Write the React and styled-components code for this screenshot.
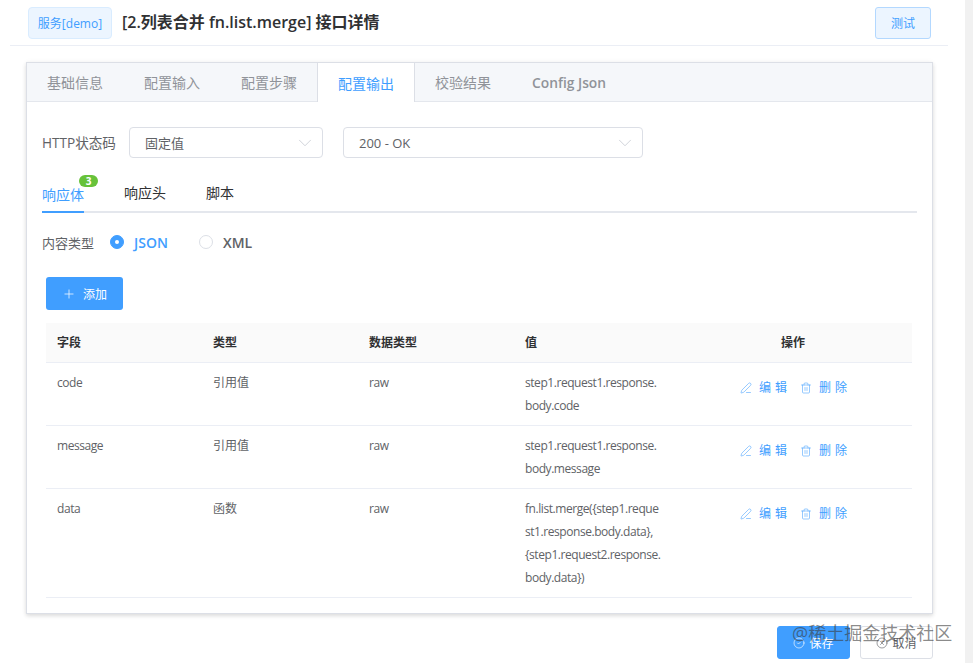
import React from 'react';
import styled, { createGlobalStyle } from 'styled-components';
import { ChevronDown, CircleCheck, CircleX, PenLine, Plus, Trash2 } from 'lucide-react';

const BLUE = '#409eff';
const FONT = '"Open Sans", "Noto Sans CJK SC", sans-serif';

const GlobalStyle = createGlobalStyle`
  html, body {
    margin: 0;
    padding: 0;
    background: #fff;
    font-family: ${FONT};
  }
  * {
    box-sizing: border-box;
  }
`;

const Page = styled.div`
  position: relative;
  width: 973px;
  height: 663px;
  overflow: hidden;
  display: grid;
  grid-template-columns: 965px 8px;
`;

const Main = styled.div`
  padding: 0 0 0 10px;
`;

const Scrollbar = styled.div`
  background: #f1f1f1;
`;

const Header = styled.header`
  width: 938px;
  height: 46px;
  padding: 7px 17px 6px 18px;
  display: flex;
  align-items: flex-start;
  border-bottom: 1px solid #ebeef5;
`;

const Tag = styled.span`
  width: 84px;
  height: 32px;
  display: flex;
  align-items: center;
  justify-content: center;
  font-size: 12px;
  color: ${BLUE};
  background: #ecf5ff;
  border: 1px solid #d9ecff;
  border-radius: 4px;
`;

const Title = styled.h1`
  margin: 0 0 0 10px;
  flex: 1;
  font-size: 16px;
  line-height: 31px;
  font-weight: 600;
  color: #303133;
`;

const TestButton = styled.button`
  width: 56px;
  height: 32px;
  padding: 0;
  font: 12px ${FONT};
  color: ${BLUE};
  background: #ecf5ff;
  border: 1px solid #b3d8ff;
  border-radius: 3px;
`;

const Card = styled.section`
  width: 907px;
  height: 552px;
  margin: 16px 0 0 16px;
  background: #fff;
  border: 1px solid #dcdfe6;
  box-shadow: 0 2px 4px rgba(0, 0, 0, 0.12), 0 0 6px rgba(0, 0, 0, 0.04);
`;

const TabBar = styled.div`
  height: 39px;
  display: flex;
  background: #f5f7fa;
  border-bottom: 1px solid #e4e7ed;
`;

const Tab = styled.div`
  height: ${({ $active }) => ($active ? '39px' : '38px')};
  padding: 0 20px;
  display: flex;
  align-items: center;
  font-size: ${({ $latin }) => ($latin ? '13.8px' : '14px')};
  font-weight: ${({ $latin }) => ($latin ? 600 : 400)};
  color: ${({ $active }) => ($active ? BLUE : '#909399')};
  background: ${({ $active }) => ($active ? '#fff' : 'transparent')};
  border-right: 1px solid ${({ $active }) => ($active ? '#dcdfe6' : 'transparent')};
  ${({ $active }) => $active && 'border-left: 1px solid #dcdfe6; margin-left: -1px;'}
`;

const Body = styled.div`
  padding: 25px 15px 0;
`;

const FieldRow = styled.div`
  display: flex;
  align-items: center;
  height: 31px;
`;

const FieldLabel = styled.label`
  width: 87px;
  padding-bottom: 2px;
  font-size: 13.6px;
  color: #606266;
`;

const Select = styled.div`
  width: ${({ $width }) => $width}px;
  height: 31px;
  margin-right: 20px;
  padding: 0 15px;
  display: flex;
  align-items: center;
  justify-content: space-between;
  font-size: 13px;
  color: #606266;
  border: 1px solid #dcdfe6;
  border-radius: 4px;

  svg {
    color: #c0c4cc;
    margin-right: -9px;
  }
`;

const SubTabs = styled.div`
  margin-top: 20px;
  width: 875px;
  height: 35px;
  display: flex;
  gap: 40px;
  border-bottom: 2px solid #e4e7ed;
`;

const SubTab = styled.div`
  position: relative;
  height: 35px;
  padding-top: ${({ $active }) => ($active ? '7px' : '5px')};
  font-size: 14px;
  line-height: 20px;
  color: ${({ $active }) => ($active ? BLUE : '#303133')};
  border-bottom: 2px solid ${({ $active }) => ($active ? BLUE : 'transparent')};
`;

const Badge = styled.span`
  position: absolute;
  top: -3px;
  right: -14px;
  width: 19px;
  height: 12px;
  font-size: 10px;
  font-weight: 700;
  line-height: 12px;
  text-align: center;
  color: #fff;
  background: #67c23a;
  border-radius: 6px;
`;

const RadioRow = styled.div`
  margin-top: 19px;
  height: 20px;
  display: flex;
  align-items: center;
`;

const RadioLabel = styled.span`
  width: 68px;
  font-size: 13px;
  color: #606266;
`;

const Radio = styled.div`
  display: flex;
  align-items: center;
  width: 89px;
  font-size: 14px;
  font-weight: 600;
  color: ${({ $on }) => ($on ? BLUE : '#606266')};
`;

const RadioDot = styled.span`
  width: 14px;
  height: 14px;
  margin-right: 10px;
  border-radius: 50%;
  display: flex;
  align-items: center;
  justify-content: center;
  background: ${({ $on }) => ($on ? BLUE : '#fff')};
  border: 1px solid ${({ $on }) => ($on ? BLUE : '#dcdfe6')};

  &::after {
    content: '';
    width: 4px;
    height: 4px;
    border-radius: 50%;
    background: #fff;
  }
`;

const AddButton = styled.button`
  margin: 25px 0 0 4px;
  width: 77px;
  height: 33px;
  padding: 0;
  display: flex;
  align-items: center;
  justify-content: center;
  gap: 7px;
  font: 12px ${FONT};
  color: #fff;
  background: ${BLUE};
  border: none;
  border-radius: 3px;
`;

const Table = styled.table`
  margin: 13px 0 0 4px;
  width: 866px;
  border-collapse: collapse;
  table-layout: fixed;
  font-size: 12px;
  color: #606266;
`;

const HeadCell = styled.th`
  width: ${({ $width }) => ($width ? `${$width}px` : 'auto')};
  height: 39px;
  padding: 0 11px;
  font-size: 12px;
  font-weight: 600;
  color: #303133;
  text-align: ${({ $center }) => ($center ? 'center' : 'left')};
  ${({ $center }) => $center && 'padding-left: 15px;'}
  background: #fafafa;
  border-bottom: 1px solid #ebeef5;
`;

const Cell = styled.td`
  padding: 8px 11px;
  line-height: 23px;
  vertical-align: top;
  border-bottom: 1px solid #ebeef5;
`;

const LatinCell = styled(Cell)`
  letter-spacing: -0.44px;
  white-space: nowrap;
`;

const Actions = styled.div`
  display: flex;
  align-items: center;
  height: 34px;
  padding-left: 59px;
  color: ${BLUE};
  letter-spacing: 4px;
`;

const ActionLink = styled.span`
  display: flex;
  align-items: center;
  gap: 7px;
  margin-right: 9px;
  white-space: nowrap;
`;

const Footer = styled.div`
  width: 923px;
  margin-top: 12px;
  display: flex;
  justify-content: flex-end;
  gap: 10px;
`;

const FooterButton = styled.button`
  width: 73px;
  height: 33px;
  padding: 0;
  display: flex;
  align-items: center;
  justify-content: center;
  gap: 4px;
  font: 12px ${FONT};
  color: ${({ $primary }) => ($primary ? '#fff' : '#606266')};
  background: ${({ $primary }) => ($primary ? BLUE : '#fff')};
  border: 1px solid ${({ $primary }) => ($primary ? BLUE : '#dcdfe6')};
  border-radius: 3px;
`;

const Watermark = styled.div`
  position: absolute;
  left: 792px;
  top: 621px;
  font-size: 18px;
  line-height: 24px;
  color: rgba(60, 60, 60, 0.6);
  white-space: nowrap;
`;

const tabs = ['基础信息', '配置输入', '配置步骤', '配置输出', '校验结果', 'Config Json'];

const rows = [
  { field: 'code', type: '引用值', value: ['step1.request1.response.', 'body.code'] },
  { field: 'message', type: '引用值', value: ['step1.request1.response.', 'body.message'] },
  {
    field: 'data',
    type: '函数',
    value: ['fn.list.merge({step1.reque', 'st1.response.body.data},', '{step1.request2.response.', 'body.data})'],
  },
];

const App = () => (
  <Page>
    <GlobalStyle />
    <Main>
      <Header>
        <Tag>服务[demo]</Tag>
        <Title>[2.列表合并 fn.list.merge] 接口详情</Title>
        <TestButton>测试</TestButton>
      </Header>
      <Card>
        <TabBar>
          {tabs.map((tab, i) => (
            <Tab key={tab} $active={i === 3} $latin={i === 5}>{tab}</Tab>
          ))}
        </TabBar>
        <Body>
          <FieldRow>
            <FieldLabel>HTTP状态码</FieldLabel>
            <Select $width={194}>固定值<ChevronDown size={22} strokeWidth={0.8} /></Select>
            <Select $width={300}>200 - OK<ChevronDown size={22} strokeWidth={0.8} /></Select>
          </FieldRow>
          <SubTabs>
            <SubTab $active>响应体<Badge>3</Badge></SubTab>
            <SubTab>响应头</SubTab>
            <SubTab>脚本</SubTab>
          </SubTabs>
          <RadioRow>
            <RadioLabel>内容类型</RadioLabel>
            <Radio $on><RadioDot $on />JSON</Radio>
            <Radio><RadioDot />XML</Radio>
          </RadioRow>
          <AddButton><Plus size={14} strokeWidth={1.25} />添加</AddButton>
          <Table>
            <thead>
              <tr>
                <HeadCell $width={156}>字段</HeadCell>
                <HeadCell $width={156}>类型</HeadCell>
                <HeadCell $width={156}>数据类型</HeadCell>
                <HeadCell $width={156}>值</HeadCell>
                <HeadCell $center>操作</HeadCell>
              </tr>
            </thead>
            <tbody>
              {rows.map((row) => (
                <tr key={row.field}>
                  <LatinCell>{row.field}</LatinCell>
                  <Cell>{row.type}</Cell>
                  <LatinCell>raw</LatinCell>
                  <LatinCell>{row.value.map((line) => <div key={line}>{line}</div>)}</LatinCell>
                  <Cell>
                    <Actions>
                      <ActionLink><PenLine size={12} strokeWidth={1.1} />编辑</ActionLink>
                      <ActionLink><Trash2 size={12} strokeWidth={1.1} />删除</ActionLink>
                    </Actions>
                  </Cell>
                </tr>
              ))}
            </tbody>
          </Table>
        </Body>
      </Card>
      <Footer>
        <FooterButton $primary><CircleCheck size={12} strokeWidth={1.25} />保存</FooterButton>
        <FooterButton><CircleX size={12} strokeWidth={1.25} />取消</FooterButton>
      </Footer>
    </Main>
    <Scrollbar />
    <Watermark>@稀土掘金技术社区</Watermark>
  </Page>
);

export default App;
